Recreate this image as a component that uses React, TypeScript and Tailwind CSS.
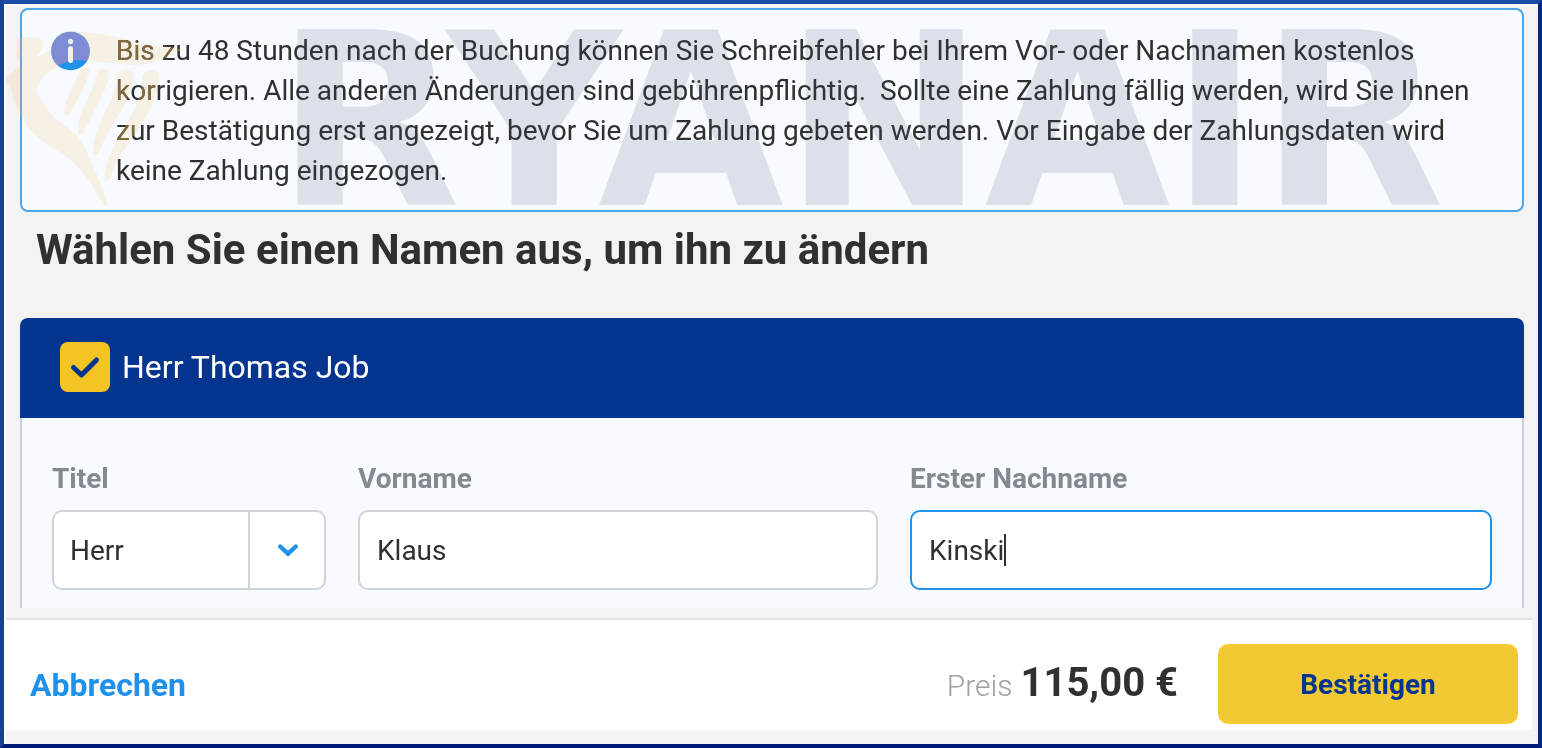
import { useState } from "react";

interface Passenger {
  title: string;
  firstName: string;
  lastName: string;
}

const titles = ["Herr", "Frau", "Fräulein"];

const infoText =
  "Bis zu 48 Stunden nach der Buchung können Sie Schreibfehler bei Ihrem Vor- oder Nachnamen kostenlos korrigieren. Alle anderen Änderungen sind gebührenpflichtig. \u00a0Sollte eine Zahlung fällig werden, wird Sie Ihnen zur Bestätigung erst angezeigt, bevor Sie um Zahlung gebeten werden. Vor Eingabe der Zahlungsdaten wird keine Zahlung eingezogen.";

const labelClass = "text-[28px] leading-10 font-bold text-[#84888f]";

function InfoIcon() {
  return (
    <svg viewBox="0 0 40 40" className="h-10 w-10 shrink-0" aria-hidden="true">
      <circle cx="20.5" cy="20" r="19.3" fill="#2091eb" />
      <circle cx="20.5" cy="10.500" r="2.700" fill="#f7faff" />
      <rect x="18" y="15" width="5" height="17" rx="2.500" fill="#f7faff" />
    </svg>
  );
}

function HarpShape() {
  return (
    <>
      <path d="M18 240C26 222 42 215 62 196C60 182 46 170 48 158C54 146 50 136 50 124C56 108 90 110 112 113C126 118 130 126 127 138C124 158 110 162 106 172C126 166 140 158 152 146C154 118 170 95 204 94C260 94 330 106 390 120C440 134 490 138 545 148C510 166 470 195 400 195C340 193 280 180 226 180C170 186 106 240 108 278C130 310 150 350 190 374C220 394 250 420 268 478C296 530 310 580 323 618C312 620 300 600 288 580C260 530 220 480 180 458C130 430 90 400 70 360C46 320 38 290 34 272C30 258 18 250 18 240Z" />
      <path d="M240 208Q248 198 268 208C262 250 235 290 212 340Q202 352 192 342C190 300 228 250 240 208Z" />
      <path d="M292 212Q312 200 328 214C325 270 275 340 252 398Q240 412 233 400C230 330 285 280 292 212Z" />
      <path d="M350 220Q378 198 400 220C400 310 320 380 298 458Q286 474 278 462C278 370 350 310 350 220Z" />
      <path d="M426 226Q450 200 477 222C480 340 355 440 330 536Q320 552 315 540C310 430 430 350 426 226Z" />
    </>
  );
}

function Watermark() {
  return (
    <>
      <svg viewBox="0 0 560 640" className="pointer-events-none absolute -top-2.5 -left-[22px] h-[213px] w-[187px] fill-[#806e38] mix-blend-lighten" aria-hidden="true">
        <HarpShape />
      </svg>
      <svg viewBox="0 0 560 640" className="pointer-events-none absolute -top-2.5 -left-[22px] h-[213px] w-[187px] fill-[#fef5e5] mix-blend-multiply" aria-hidden="true">
        <HarpShape />
      </svg>
      <div className="pointer-events-none absolute right-2 bottom-0 left-46 text-center font-['DejaVu_Sans',sans-serif] text-[240px] leading-[176px] font-bold text-[#2f4660]/14" aria-hidden="true">
        RYANAIR
      </div>
    </>
  );
}

export default function App() {
  const [selected, setSelected] = useState(true);
  const [passenger, setPassenger] = useState<Passenger>({
    title: "Herr",
    firstName: "Klaus",
    lastName: "Kinski",
  });

  const update = (field: keyof Passenger, value: string) => {
    setPassenger((current) => ({ ...current, [field]: value }));
  };

  return (
    <div className="min-h-screen border-4 border-t-[#1c4da6] border-r-[#002887] border-b-[#001a78] border-l-[#144198] bg-white pt-0.5 pl-0.5 font-[Roboto,sans-serif] text-[#303030]">
      <div className="bg-[#f3f3f3] pb-3.5">
        <main className="pt-0.5 pr-3.5 pb-2.5 pl-3.5">
          <section className="relative flex gap-[26px] rounded-lg border-2 border-[#4ba6ee] bg-[#f7faff] pt-[21px] pr-10 pb-[19px] pl-7">
            <InfoIcon />
            <p className="text-[28px] leading-10">{infoText}</p>
            <Watermark />
          </section>

          <h1 className="px-4 pt-3.5 pb-11 text-[42px] leading-12 font-bold">
            Wählen Sie einen Namen aus, um ihn zu ändern
          </h1>

          <section>
            <label className="flex items-center gap-3 rounded-t-lg bg-[#06358f] px-10 pt-6 pb-[26px] text-white">
              <span className="relative flex">
                <input
                  type="checkbox"
                  checked={selected}
                  onChange={(event) => setSelected(event.target.checked)}
                  className="h-[50px] w-[50px] appearance-none rounded-lg bg-white checked:bg-[#f4c424]"
                />
                {selected && (
                  <svg viewBox="0 0 50 50" className="pointer-events-none absolute inset-0" aria-hidden="true">
                    <path d="M13.5 25.5L21.5 33L36.5 18" fill="none" stroke="#06358f" strokeWidth="5" strokeLinecap="round" strokeLinejoin="round" />
                  </svg>
                )}
              </span>
              <span className="text-[32px] leading-[50px]">Herr Thomas Job</span>
            </label>

            <div className="grid grid-cols-[274fr_520fr_582fr] gap-8 border-x-2 border-[#c8cde8] bg-[#f7faff] px-[30px] pt-[41px] pb-[18px]">
              <div className="flex min-w-0 flex-col gap-[11px]">
                <label htmlFor="title" className={labelClass}>Titel</label>
                <div className="relative">
                  <select
                    id="title"
                    value={passenger.title}
                    onChange={(event) => update("title", event.target.value)}
                    className="h-20 w-full appearance-none rounded-[10px] border-2 border-[#d0d4d8] bg-white px-4 pt-0.5 text-[28px]"
                  >
                    {titles.map((title) => (
                      <option key={title}>{title}</option>
                    ))}
                  </select>
                  <span className="pointer-events-none absolute inset-y-0.5 right-0.5 flex w-19 items-center justify-center border-l-2 border-[#d0d4d8]">
                    <svg viewBox="0 0 24 24" className="h-6 w-6" aria-hidden="true">
                      <path d="M5.200 8.500L13 15.700L20.800 8.500" fill="none" stroke="#2091eb" strokeWidth="4.400" strokeLinecap="round" />
                    </svg>
                  </span>
                </div>
              </div>

              <div className="flex min-w-0 flex-col gap-[11px]">
                <label htmlFor="firstName" className={labelClass}>Vorname</label>
                <input
                  id="firstName"
                  value={passenger.firstName}
                  onChange={(event) => update("firstName", event.target.value)}
                  className="h-20 w-full rounded-[10px] border-2 border-[#d0d4d8] bg-white px-[17px] text-[28px] outline-none"
                />
              </div>

              <div className="flex min-w-0 flex-col gap-[11px]">
                <label htmlFor="lastName" className={labelClass}>Erster Nachname</label>
                <div className="flex h-20 items-center rounded-[10px] border-2 border-[#2091eb] bg-white px-[17px]">
                  <input
                    id="lastName"
                    value={passenger.lastName}
                    onChange={(event) => update("lastName", event.target.value)}
                    className="field-sizing-content h-full text-[28px] caret-transparent outline-none"
                  />
                  <span className="h-8 w-0.5 bg-[#303030]" />
                </div>
              </div>
            </div>
          </section>
        </main>

        <footer className="mr-1.5 flex items-center justify-between border-t-2 border-[#e5e5e5] bg-white pt-6 pr-3.5 pb-1.5 pl-6">
          <a href="#" className="pt-0.5 text-[32px] font-bold text-[#2091eb]">Abbrechen</a>
          <div className="flex items-center gap-10">
            <p className="flex items-baseline gap-2 pb-0.5">
              <span className="text-[30px] font-light text-[#a0a0a0]">Preis</span>
              <span className="text-[40px] font-bold">115,00 €</span>
            </p>
            <button type="button" className="h-20 w-[300px] rounded-[10px] bg-[#f1c933] pt-0.5 text-[28px] font-bold text-[#06358f]">
              Bestätigen
            </button>
          </div>
        </footer>
      </div>
    </div>
  );
}
